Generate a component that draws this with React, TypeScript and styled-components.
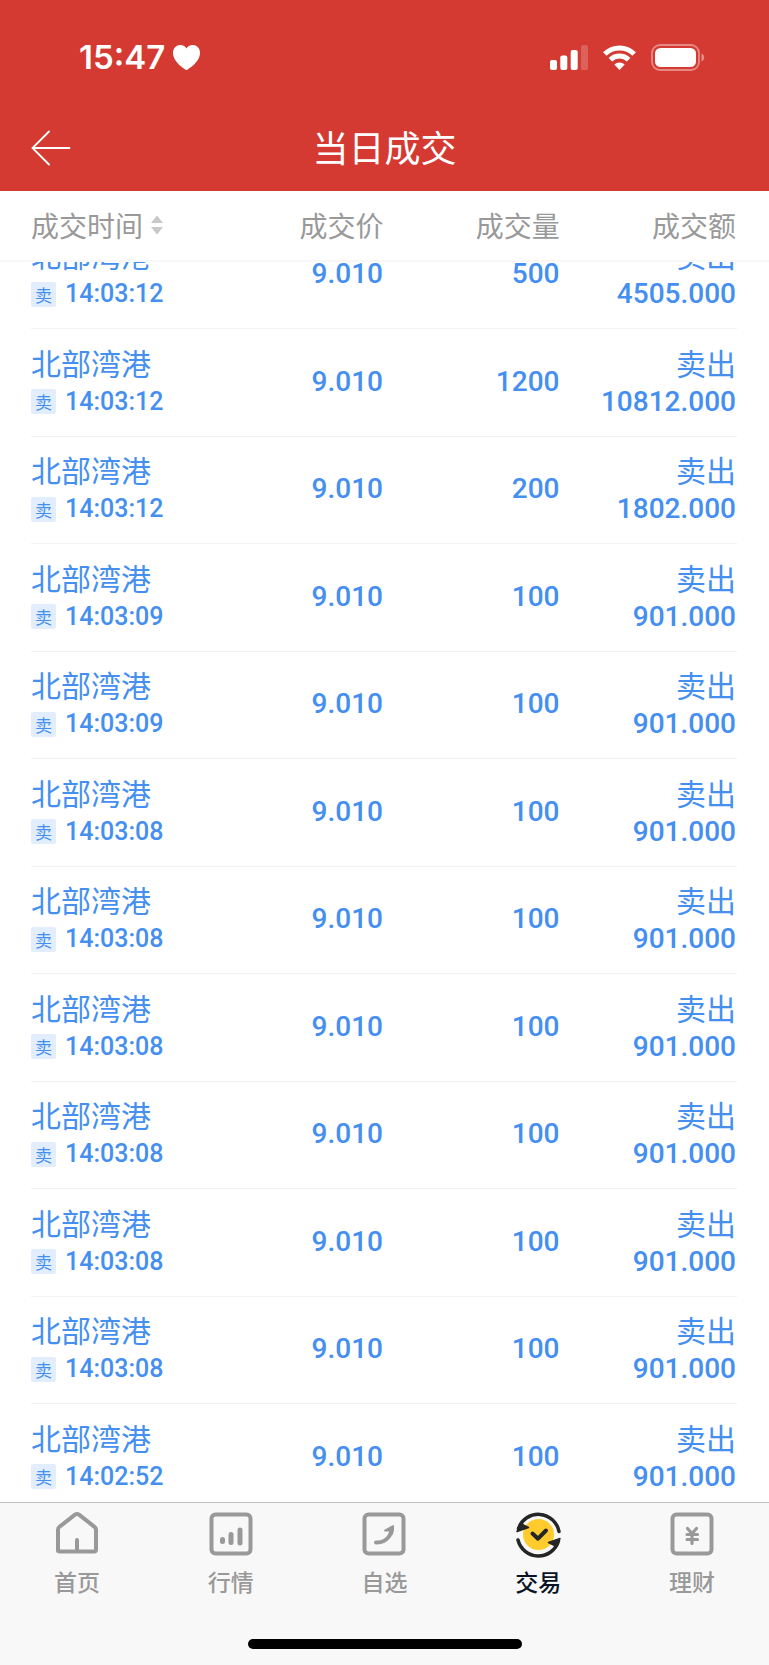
import { useLayoutEffect, useRef } from "react";
import type { ReactNode } from "react";
import styled, { createGlobalStyle } from "styled-components";

const GlobalStyle = createGlobalStyle`
  *, *::before, *::after { box-sizing: border-box; }
  body {
    margin: 0;
    background: #fff;
    font-family: "Noto Sans CJK SC", "Noto Sans", sans-serif;
  }
`;

const Screen = styled.div`
  display: flex;
  flex-direction: column;
  height: 100vh;
  overflow: hidden;
`;

const Header = styled.header`
  flex: none;
  background: #d53a32;
  color: #fff;
`;

const StatusBar = styled.div`
  display: flex;
  align-items: center;
  justify-content: space-between;
  padding: 37px 64px 0 79px;
`;

const StatusGroup = styled.div<{ $gap: number }>`
  display: flex;
  align-items: center;
  gap: ${(p) => p.$gap}px;
`;

const Clock = styled.time`
  font: 600 33px/40px Inter, sans-serif;
`;

const TitleBar = styled.div`
  display: grid;
  grid-template-columns: 80px 1fr 80px;
  align-items: center;
  height: 86px;
  margin-top: 28px;
`;

const BackButton = styled.button`
  display: flex;
  padding: 0 0 0 31px;
  border: 0;
  background: none;
  color: inherit;
`;

const Title = styled.h1`
  margin: 0;
  padding-bottom: 4px;
  font-size: 36px;
  font-weight: 400;
  line-height: 48px;
  text-align: center;
`;

const Scroller = styled.main`
  flex: 1;
  min-height: 0;
  overflow-y: auto;
  scrollbar-width: none;
`;

const Table = styled.table`
  display: block;
`;

const TableHead = styled.thead`
  display: block;
  position: sticky;
  top: 0;
  background: #fff;
  border-bottom: 2px solid #f8f8f8;
`;

const TableBody = styled.tbody`
  display: block;
  padding: 0 32px 0 31px;
`;

const HeadRow = styled.tr`
  display: grid;
  grid-template-columns: repeat(4, 1fr);
  align-items: center;
  height: 69px;
  padding: 0 33px 2px 31px;
`;

const HeadCell = styled.th`
  padding: 0;
  color: #999;
  font-size: 28px;
  font-weight: 400;
  line-height: 40px;
  text-align: right;
`;

const SortButton = styled.button`
  display: flex;
  align-items: center;
  gap: 8px;
  padding: 0;
  border: 0;
  background: none;
  color: inherit;
  font: inherit;
`;

const Row = styled.tr`
  display: grid;
  grid-template-columns: repeat(4, 1fr);
  align-items: center;
  height: 107px;
  padding-bottom: 2px;
  border-bottom: 1px solid #f3f3f3;
  color: #458ff0;

  &:nth-child(even) { height: 108px; }
`;

const Cell = styled.td<{ $align?: "left" | "right" }>`
  display: flex;
  flex-direction: column;
  gap: 4px;
  align-items: ${(p) => (p.$align === "left" ? "flex-start" : "flex-end")};
  padding: 0 1px 0 0;
`;

const Label = styled.span`
  font-size: 30px;
  line-height: 36px;
  white-space: nowrap;
`;

const Figure = styled.span`
  font: 500 28px/36px Roboto, sans-serif;
`;

const TimeLine = styled.span`
  display: flex;
  align-items: center;
  gap: 9px;
  height: 36px;
`;

const Badge = styled.span`
  width: 25px;
  height: 25px;
  border-radius: 2px;
  background: #e2eefe;
  font-size: 17px;
  line-height: 25px;
  text-align: center;
`;

const TradeTime = styled.time`
  font: 500 25px/36px Roboto, sans-serif;
`;

const Footer = styled.footer`
  flex: none;
  border-top: 1px solid #c0c0c0;
  background: #f8f8f8;
`;

const Tabs = styled.nav`
  display: grid;
  grid-template-columns: repeat(5, 1fr);
  padding-top: 7px;
`;

const Tab = styled.a<{ $active?: boolean }>`
  display: flex;
  flex-direction: column;
  align-items: center;
  gap: 7px;
  color: ${(p) => (p.$active ? "#0a1426" : "#999")};
  font-size: 23px;
  font-weight: 500;
  line-height: 32px;
  text-decoration: none;
`;

const HomeIndicator = styled.div`
  width: 274px;
  height: 10px;
  margin: 42px auto 16px;
  border-radius: 5px;
  background: #000;
`;

interface Trade {
  time: string;
  volume: string;
  amount: string;
}

const trades: Trade[] = [
  { time: "14:03:12", volume: "500", amount: "4505.000" },
  { time: "14:03:12", volume: "1200", amount: "10812.000" },
  { time: "14:03:12", volume: "200", amount: "1802.000" },
  { time: "14:03:09", volume: "100", amount: "901.000" },
  { time: "14:03:09", volume: "100", amount: "901.000" },
  { time: "14:03:08", volume: "100", amount: "901.000" },
  { time: "14:03:08", volume: "100", amount: "901.000" },
  { time: "14:03:08", volume: "100", amount: "901.000" },
  { time: "14:03:08", volume: "100", amount: "901.000" },
  { time: "14:03:08", volume: "100", amount: "901.000" },
  { time: "14:03:08", volume: "100", amount: "901.000" },
  { time: "14:02:52", volume: "100", amount: "901.000" },
];

const HeartIcon = () => (
  <svg width="27" height="25" viewBox="0 0 27 25" fill="#fff" aria-hidden="true">
    <path d="M13.5 25C12.5 25 0 17 0 8 0 3 3.300 0 7.300 0c2.900 0 5 1.500 6.200 3.500C14.700 1.500 16.800 0 19.700 0 23.700 0 27 3 27 8c0 9-12.500 17-13.500 17z" />
  </svg>
);

const SignalIcon = () => (
  <svg width="38" height="25" viewBox="0 0 38 25" fill="#fff" aria-hidden="true">
    <rect x="0" y="15" width="7" height="10" rx="2" />
    <rect x="10.300" y="10.500" width="7" height="14.500" rx="2" />
    <rect x="20.700" y="5" width="7" height="20" rx="2" />
    <rect x="31" y="0" width="7" height="25" rx="2" opacity=".2" />
  </svg>
);

const WifiIcon = () => (
  <svg width="33" height="25" viewBox="0 0 33 25" aria-hidden="true">
    <g fill="none" stroke="#fff" strokeWidth="5">
      <path d="M1.800 9a20.800 20.800 0 0 1 29.400 0" />
      <path d="M7.400 14.800a12.900 12.900 0 0 1 18.200 0" />
    </g>
    <path d="M16.500 25l-5.200-5.400a7.600 7.600 0 0 1 10.400 0z" fill="#fff" />
  </svg>
);

const BatteryIcon = () => (
  <svg width="54" height="27" viewBox="0 0 54 27" aria-hidden="true">
    <rect x="1" y="1" width="47" height="25" rx="8" fill="none" stroke="#fff" strokeWidth="1.800" opacity=".4" />
    <rect x="4" y="4" width="41" height="19" rx="5.500" fill="#fff" />
    <path d="M50.500 9.500q2.700 1.200 2.700 4t-2.700 4z" fill="#fff" opacity=".45" />
  </svg>
);

const BackIcon = () => (
  <svg width="40" height="36" viewBox="0 0 40 36" fill="none" stroke="#fff" strokeWidth="1.800" strokeLinecap="round" aria-hidden="true">
    <path d="M18 1.500L1.500 18 18 34.500M1.500 18H38.500" />
  </svg>
);

const SortIcon = () => (
  <svg width="12" height="20" viewBox="0 0 12 20" fill="#c8c8c8" aria-hidden="true">
    <path d="M6 0.500l6 7.500H0zM0 12h12l-6 7.500z" />
  </svg>
);

const TabIcon = ({ children }: { children: ReactNode }) => (
  <svg width="48" height="48" viewBox="0 0 48 48" fill="none" stroke="#999" strokeWidth="4" strokeLinecap="round" strokeLinejoin="round" aria-hidden="true">
    {children}
  </svg>
);

const frame = <rect x="4.500" y="4.500" width="39" height="39" rx="4" />;

const tabs = [
  {
    name: "首页",
    icon: (
      <TabIcon>
        <path d="M5 41V19.500Q5 18 6.500 16.800L22 4.700q2-1.400 4 0l15.500 12.100Q43 18 43 19.500V39.500q0 2-2 2H7q-2 0-2-2z" />
        <path d="M24 30v10" />
      </TabIcon>
    ),
  },
  {
    name: "行情",
    icon: (
      <TabIcon>
        {frame}
        <path d="M15.500 29.500v2M24 24.500v8M33 20v13" strokeWidth="5" />
      </TabIcon>
    ),
  },
  {
    name: "自选",
    icon: (
      <TabIcon>
        {frame}
        <path d="M16 32.500C23 32.500 30 29 31.500 20" />
        <path d="M25 20.500l8-4.500q.5 4-1 8l-2-3.500z" fill="#999" strokeWidth="2" />
      </TabIcon>
    ),
  },
  {
    name: "交易",
    active: true,
    icon: (
      <TabIcon>
        <circle cx="24.500" cy="24.500" r="15.500" fill="#ffcb2d" stroke="none" />
        <path d="M45 21.500A21 21 0 0 0 4.500 18.500M4 30a21 21 0 0 0 40.500 1" stroke="#252525" strokeWidth="3.500" />
        <path d="M3 21.500L6.500 13.500 14.500 17.500zM46 28.500l-3.500 8-8-4z" fill="#252525" stroke="#252525" strokeWidth="1.500" />
        <path d="M18.500 23.500l5.500 5.200 8-8.200" stroke="#252525" />
      </TabIcon>
    ),
  },
  {
    name: "理财",
    icon: (
      <TabIcon>
        {frame}
        <path d="M19.500 18.500l4.500 5 4.500-5M19 24.500h10.500M19 29.500h10.500M24 24v9.500" strokeWidth="3.200" />
      </TabIcon>
    ),
  },
];

export default function App() {
  const scroller = useRef<HTMLElement>(null);

  // Open the list slightly scrolled, with the first trade under the column heads.
  useLayoutEffect(() => {
    if (scroller.current) scroller.current.scrollTop = 40;
  }, []);

  return (
    <Screen>
      <GlobalStyle />
      <Header>
        <StatusBar>
          <StatusGroup $gap={8}>
            <Clock>15:47</Clock>
            <HeartIcon />
          </StatusGroup>
          <StatusGroup $gap={15}>
            <SignalIcon />
            <WifiIcon />
            <BatteryIcon />
          </StatusGroup>
        </StatusBar>
        <TitleBar>
          <BackButton type="button" aria-label="返回">
            <BackIcon />
          </BackButton>
          <Title>当日成交</Title>
        </TitleBar>
      </Header>

      <Scroller ref={scroller}>
        <Table>
          <TableHead>
            <HeadRow>
              <HeadCell scope="col">
                <SortButton type="button">
                  成交时间
                  <SortIcon />
                </SortButton>
              </HeadCell>
              <HeadCell scope="col">成交价</HeadCell>
              <HeadCell scope="col">成交量</HeadCell>
              <HeadCell scope="col">成交额</HeadCell>
            </HeadRow>
          </TableHead>
          <TableBody>
            {trades.map((trade, index) => (
              <Row key={index}>
                <Cell $align="left">
                  <Label>北部湾港</Label>
                  <TimeLine>
                    <Badge>卖</Badge>
                    <TradeTime>{trade.time}</TradeTime>
                  </TimeLine>
                </Cell>
                <Cell>
                  <Figure>9.010</Figure>
                </Cell>
                <Cell>
                  <Figure>{trade.volume}</Figure>
                </Cell>
                <Cell>
                  <Label>卖出</Label>
                  <Figure>{trade.amount}</Figure>
                </Cell>
              </Row>
            ))}
          </TableBody>
        </Table>
      </Scroller>

      <Footer>
        <Tabs>
          {tabs.map((tab) => (
            <Tab key={tab.name} href="#" $active={tab.active} aria-current={tab.active ? "page" : undefined}>
              {tab.icon}
              {tab.name}
            </Tab>
          ))}
        </Tabs>
        <HomeIndicator />
      </Footer>
    </Screen>
  );
}
